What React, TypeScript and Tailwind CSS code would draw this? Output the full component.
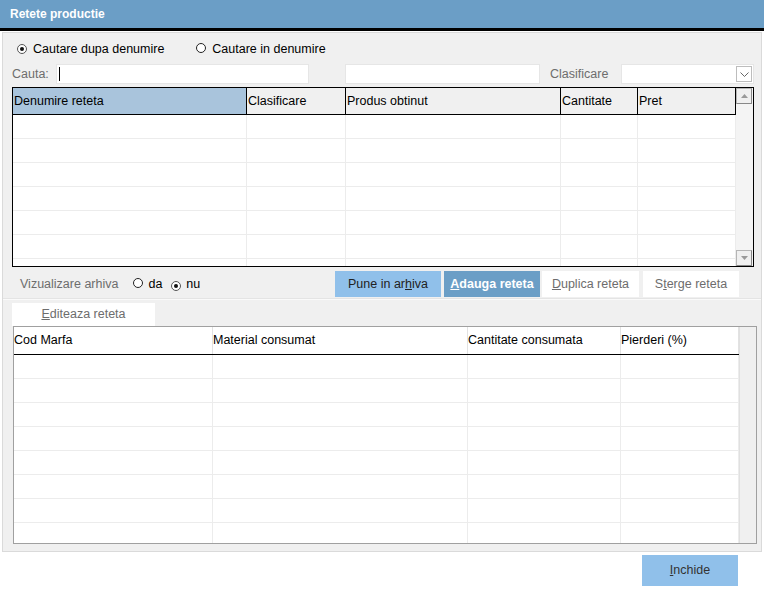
import React from 'react';

function Radio({ checked }: { checked?: boolean }) {
  return (
    <span
      className={`inline-flex items-center justify-center w-[10px] h-[10px] rounded-full border bg-white ${
        checked ? 'border-[#555]' : 'border-[#222]'
      }`}
    >
      {checked && <span className="w-[4px] h-[4px] rounded-full bg-[#111]" />}
    </span>
  );
}

function ScrollArrow({ up }: { up?: boolean }) {
  return (
    <div className="h-[16px] w-[16px] flex items-center justify-center bg-[#f0f0f0] border border-[#b5b5b5] border-r-[#888] border-b-[#888]">
      <svg width="7" height="4" viewBox="0 0 7 4">
        {up ? <polygon points="0,4 7,4 3.5,0" fill="#9a9a9a" /> : <polygon points="0,0 7,0 3.5,4" fill="#9a9a9a" />}
      </svg>
    </div>
  );
}

const recipeCols = [
  { name: 'Denumire reteta', w: 'w-[234px]', active: true },
  { name: 'Clasificare', w: 'w-[99px]' },
  { name: 'Produs obtinut', w: 'w-[215px]' },
  { name: 'Cantitate', w: 'w-[77px]' },
  { name: 'Pret', w: 'w-[98px]' },
];

const materialCols = [
  { name: 'Cod Marfa', w: 'w-[199px]' },
  { name: 'Material consumat', w: 'w-[255px]' },
  { name: 'Cantitate consumata', w: 'w-[153px]' },
  { name: 'Pierderi (%)', w: 'w-[118px]' },
];

export default function App() {
  return (
    <div className="w-[764px] h-[606px] bg-white text-[12.5px] text-black font-['Liberation_Sans',Arial,sans-serif] overflow-hidden">
      {/* title */}
      <div className="h-[28px] bg-[#6b9ec6] flex items-center pl-[10px] text-[12px] text-white font-bold">Retete productie</div>
      <div className="h-[3px] bg-black" />

      <div className="mt-[1px] mx-[2px] h-[520px] bg-[#f0f0f0] border border-[#dadada] flex flex-col">
        {/* search mode */}
        <div className="mt-[8px] h-[16px] flex items-center pl-[14px] shrink-0">
          <Radio checked />
          <span className="ml-[6px]">Cautare dupa denumire</span>
          <span className="ml-[32px]">
            <Radio />
          </span>
          <span className="ml-[6px]">Cautare in denumire</span>
        </div>

        {/* search inputs */}
        <div className="mt-[7px] h-[20px] flex items-center pl-[9px] shrink-0">
          <span className="w-[44px] text-[#6d6d6d]">Cauta:</span>
          <div className="w-[253px] h-[20px] bg-white border border-[#e6e6e6] flex items-center pl-[2px]">
            <span className="w-[1px] h-[14px] bg-black" />
          </div>
          <div className="ml-[36px] w-[195px] h-[20px] bg-white border border-[#e6e6e6]" />
          <span className="ml-[10px] w-[71px] text-[#6d6d6d]">Clasificare</span>
          <div className="w-[133px] h-[20px] bg-white border border-[#e6e6e6] flex justify-end items-center pr-[1px]">
            <div className="w-[16px] h-[16px] border border-[#bdbdbd] bg-white flex items-center justify-center">
              <svg width="9" height="5" viewBox="0 0 9 5">
                <polyline points="0.5,0.5 4.5,4.5 8.5,0.5" fill="none" stroke="#666" strokeWidth="1" />
              </svg>
            </div>
          </div>
        </div>

        {/* recipes table */}
        <div className="mt-[3px] ml-[9px] w-[742px] h-[180px] border border-black flex bg-white overflow-hidden shrink-0">
          <div className="w-[723px] flex flex-col overflow-hidden">
            <div className="h-[27px] flex border-b border-black shrink-0">
              {recipeCols.map((c) => (
                <div
                  key={c.name}
                  className={`${c.w} h-full flex items-center pl-[1px] border-r border-black ${
                    c.active ? 'bg-[#a9c4dc]' : 'bg-[#f0f0f0]'
                  }`}
                >
                  {c.name}
                </div>
              ))}
            </div>
            {Array.from({ length: 7 }).map((_, i) => (
              <div key={i} className="h-[24px] flex border-b border-[#ececec] shrink-0">
                {recipeCols.map((c) => (
                  <div key={c.name} className={`${c.w} h-full border-r border-[#ececec]`} />
                ))}
              </div>
            ))}
          </div>
          <div className="w-[17px] h-full flex flex-col justify-between bg-[#f4f4f4]">
            <ScrollArrow up />
            <ScrollArrow />
          </div>
        </div>

        {/* archive / actions */}
        <div className="mt-[4px] h-[26px] flex items-center shrink-0">
          <div className="w-[332px] flex items-center">
            <span className="ml-[17px] text-[#6d6d6d]">Vizualizare arhiva</span>
            <span className="ml-[15px]">
              <Radio />
            </span>
            <span className="ml-[5px]">da</span>
            <span className="ml-[9px]">
              <Radio checked />
            </span>
            <span className="ml-[5px]">nu</span>
          </div>
          <button className="w-[106px] h-[26px] bg-[#90c0ea] text-[#222]">
            Pune in ar<span className="underline">h</span>iva
          </button>
          <button className="ml-[3px] w-[96px] h-[26px] bg-[#6b9ec6] text-white font-bold">
            <span className="underline">A</span>dauga reteta
          </button>
          <button className="ml-[2px] w-[97px] h-[26px] bg-white text-[#6d6d6d]">
            <span className="underline">D</span>uplica reteta
          </button>
          <button className="ml-[4px] w-[96px] h-[26px] bg-white text-[#6d6d6d]">
            S<span className="underline">t</span>erge reteta
          </button>
        </div>

        <div className="mt-[1px] h-[2px] bg-[#fafafa] border-t border-[#e4e4e4] shrink-0" />

        {/* edit tab */}
        <div className="mt-[3px] ml-[9px] w-[143px] h-[23px] bg-white text-[#6d6d6d] flex items-center justify-center shrink-0">
          <span>
            <span className="underline">E</span>diteaza reteta
          </span>
        </div>

        {/* materials table */}
        <div className="ml-[10px] w-[744px] h-[218px] border border-[#a0a0a0] bg-white flex overflow-hidden shrink-0">
          <div className="w-[725px] flex flex-col overflow-hidden">
            <div className="h-[28px] flex border-b border-black shrink-0">
              {materialCols.map((c) => (
                <div key={c.name} className={`${c.w} h-full flex items-center border-r border-[#e2e2e2]`}>
                  {c.name}
                </div>
              ))}
            </div>
            {Array.from({ length: 8 }).map((_, i) => (
              <div key={i} className="h-[24px] flex border-b border-[#ececec] shrink-0">
                {materialCols.map((c) => (
                  <div key={c.name} className={`${c.w} h-full border-r border-[#ececec]`} />
                ))}
              </div>
            ))}
          </div>
          <div className="flex-1 bg-[#f0f0f0] border-l border-[#e0e0e0]" />
        </div>
      </div>

      {/* footer */}
      <div className="mt-[3px] flex justify-end pr-[26px]">
        <button className="w-[96px] h-[31px] bg-[#90c0ea] text-[#333]">
          <span className="underline">I</span>nchide
        </button>
      </div>
    </div>
  );
}
